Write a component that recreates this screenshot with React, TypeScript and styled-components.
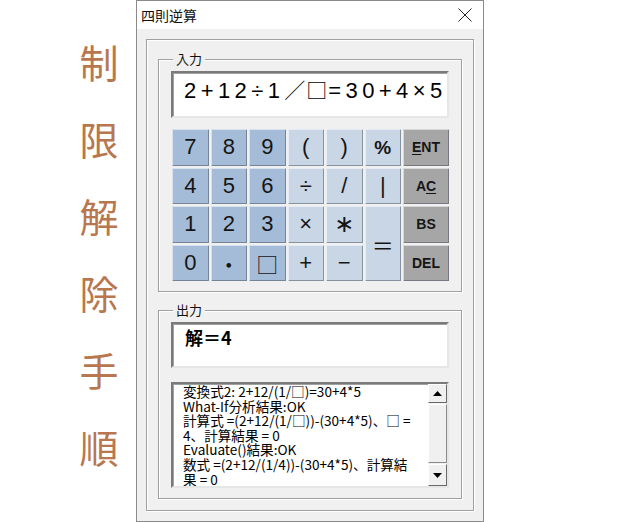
import React from 'react';
import styled, { createGlobalStyle, css } from 'styled-components';

const GlobalStyle = createGlobalStyle`
  html, body {
    margin: 0;
    padding: 0;
    background: #ffffff;
  }
  body {
    font-family: "Noto Sans CJK JP", "Noto Sans", sans-serif;
  }
`;

type KeyTone = 'digit' | 'op' | 'cmd';

interface KeyDef {
  label: React.ReactNode;
  tone: KeyTone;
  tall?: boolean;
  glyph?: 'cjk' | 'math';
  bold?: boolean;
}

const keys: KeyDef[] = [
  { label: '7', tone: 'digit' },
  { label: '8', tone: 'digit' },
  { label: '9', tone: 'digit' },
  { label: '(', tone: 'op' },
  { label: ')', tone: 'op' },
  { label: '%', tone: 'op', bold: true },
  { label: <><u>E</u>NT</>, tone: 'cmd' },
  { label: '4', tone: 'digit' },
  { label: '5', tone: 'digit' },
  { label: '6', tone: 'digit' },
  { label: '÷', tone: 'op' },
  { label: '/', tone: 'op' },
  { label: '|', tone: 'op' },
  { label: <>A<u>C</u></>, tone: 'cmd' },
  { label: '1', tone: 'digit' },
  { label: '2', tone: 'digit' },
  { label: '3', tone: 'digit' },
  { label: '×', tone: 'op' },
  { label: '∗', tone: 'op', glyph: 'math' },
  { label: '＝', tone: 'op', tall: true, glyph: 'cjk' },
  { label: 'BS', tone: 'cmd' },
  { label: '0', tone: 'digit' },
  { label: '・', tone: 'digit', glyph: 'cjk' },
  { label: '□', tone: 'digit', glyph: 'cjk' },
  { label: '+', tone: 'op' },
  { label: '−', tone: 'op' },
  { label: 'DEL', tone: 'cmd' }
];

// 出力ログ（折り返し位置は元画面どおり）
const logLines = [
  '変換式2: 2+12/(1/□)=30+4*5',
  'What-If分析結果:OK',
  '計算式 =(2+12/(1/□))-(30+4*5)、□ =',
  '4、計算結果 = 0',
  'Evaluate()結果:OK',
  '数式 =(2+12/(1/4))-(30+4*5)、計算結',
  '果 = 0'
];

const sideChars = ['制', '限', '解', '除', '手', '順'];

const App = () => {
  return (
    <Page>
      <GlobalStyle />
      <Side>
        {sideChars.map((c) => (
          <SideChar key={c}>{c}</SideChar>
        ))}
      </Side>

      <Window>
        <TitleBar>
          <Title>四則逆算</Title>
          <CloseIcon width="16" height="16" viewBox="0 0 16 16">
            <line x1="1.5" y1="1.5" x2="14.5" y2="14.5" stroke="#222" strokeWidth="1" />
            <line x1="14.5" y1="1.5" x2="1.5" y2="14.5" stroke="#222" strokeWidth="1" />
          </CloseIcon>
        </TitleBar>

        <Body>
          <OuterFrame>
            <Group>
              <GroupLabel>入力</GroupLabel>
              <InputBox>
                2+12÷1<Wide>／</Wide><Wide>□</Wide>=30+4×5
              </InputBox>
              <Keypad>
                {keys.map((k, i) => (
                  <Key key={i} $tone={k.tone} $tall={k.tall} $glyph={k.glyph} $bold={k.bold}>
                    {k.label}
                  </Key>
                ))}
              </Keypad>
            </Group>

            <Group $gapTop>
              <GroupLabel>出力</GroupLabel>
              <ResultBox>解＝4</ResultBox>
              <LogBox>
                <LogText>
                  {logLines.map((line) => (
                    <LogLine key={line}>{line}</LogLine>
                  ))}
                </LogText>
                <ScrollBar>
                  <ScrollBtn>
                    <svg width="9" height="5" viewBox="0 0 9 5">
                      <polygon points="4.5,0 9,5 0,5" fill="#000" />
                    </svg>
                  </ScrollBtn>
                  <ScrollThumb />
                  <ScrollBtn $down>
                    <svg width="9" height="5" viewBox="0 0 9 5">
                      <polygon points="0,0 9,0 4.5,5" fill="#000" />
                    </svg>
                  </ScrollBtn>
                </ScrollBar>
              </LogBox>
            </Group>
          </OuterFrame>
        </Body>
      </Window>
    </Page>
  );
};

const etched = css`
  border: 1px solid #a0a0a0;
  box-shadow:
    inset 1px 1px 0 #ffffff,
    1px 1px 0 #ffffff;
`;

const sunken = css`
  border-style: solid;
  border-width: 2px;
  border-color: #7a7a7a #e6e6e6 #e6e6e6 #7a7a7a;
  box-shadow: inset 1px 1px 0 #a0a0a0;
  background: #ffffff;
  box-sizing: border-box;
`;

const Page = styled.div`
  display: flex;
  width: 620px;
  height: 522px;
  background: #ffffff;
`;

const Side = styled.div`
  width: 136px;
  box-sizing: border-box;
  padding: 23px 0 0 62px;
  display: flex;
  flex-direction: column;
  align-items: center;
`;

const SideChar = styled.div`
  font-family: "Noto Sans CJK JP", sans-serif;
  font-size: 39px;
  line-height: 77px;
  color: #b8774f;
`;

const Window = styled.div`
  width: 348px;
  height: 522px;
  box-sizing: border-box;
  border: 1px solid #8a8a8a;
  background: #f0f0f0;
  display: flex;
  flex-direction: column;
`;

const TitleBar = styled.div`
  height: 29px;
  background: #ffffff;
  display: flex;
  align-items: center;
  justify-content: space-between;
  padding: 0 10px 0 4px;
`;

const Title = styled.span`
  font-family: "Noto Sans CJK JP", sans-serif;
  font-size: 14px;
  color: #111;
`;

const CloseIcon = styled.svg`
  display: block;
`;

const Body = styled.div`
  flex: 1;
  padding: 10px 9px;
  display: flex;
  flex-direction: column;
`;

const OuterFrame = styled.div`
  ${etched};
  flex: 1;
  padding: 19px 11px 11px 11px;
  display: flex;
  flex-direction: column;
`;

const Group = styled.div<{ $gapTop?: boolean }>`
  ${etched};
  position: relative;
  padding: 11px 12px 10px 12px;
  margin-top: ${(p) => (p.$gapTop ? '18px' : '0')};
  display: flex;
  flex-direction: column;
`;

const GroupLabel = styled.span`
  position: absolute;
  top: -10px;
  left: 14px;
  padding: 0 3px;
  background: #f0f0f0;
  font-family: "Noto Sans CJK JP", sans-serif;
  font-size: 13px;
  line-height: 18px;
  color: #111;
`;

const InputBox = styled.div`
  ${sunken};
  height: 47px;
  padding: 2px 0 0 11px;
  font-family: "Liberation Sans", "Noto Sans CJK JP", sans-serif;
  font-size: 22px;
  line-height: 28px;
  letter-spacing: 4.4px;
  color: #000;
  white-space: nowrap;
  overflow: hidden;
`;

const Wide = styled.span`
  font-family: "Noto Sans CJK JP", sans-serif;
  font-size: 21px;
  letter-spacing: 1px;
`;

const toneBg: Record<KeyTone, string> = {
  digit: '#a5bcd8',
  op: '#c9d6e6',
  cmd: '#a6a6a6'
};

const Keypad = styled.div`
  display: grid;
  grid-template-columns: repeat(6, 1fr) 46px;
  grid-template-rows: repeat(4, 1fr);
  gap: 2px;
  height: 152px;
  margin: 11px 0 0 1px;
`;

const Key = styled.div<{
  $tone: KeyTone;
  $tall?: boolean;
  $glyph?: 'cjk' | 'math';
  $bold?: boolean;
}>`
  display: flex;
  align-items: center;
  justify-content: center;
  grid-row: ${(p) => (p.$tall ? 'span 2' : 'auto')};
  background: ${(p) => toneBg[p.$tone]};
  box-shadow:
    inset 1px 1px 0 rgba(255, 255, 255, 0.55),
    inset -1px -1px 0 rgba(70, 78, 90, 0.5);
  color: #151515;
  font-family: ${(p) =>
    p.$glyph === 'cjk'
      ? '"Noto Sans CJK JP", sans-serif'
      : p.$glyph === 'math'
        ? '"DejaVu Sans", sans-serif'
        : '"Liberation Sans", Arial, sans-serif'};
  font-size: ${(p) =>
    p.$tone === 'cmd' ? '14px' : p.$glyph === 'math' ? '24px' : p.$bold ? '19px' : '22px'};
  font-weight: ${(p) => (p.$tone === 'cmd' || p.$bold ? 700 : 400)};
  line-height: 1;

  u {
    text-decoration-thickness: 1px;
    text-underline-offset: 2px;
  }
`;

const ResultBox = styled.div`
  ${sunken};
  height: 46px;
  padding: 1px 0 0 12px;
  font-family: "Noto Sans CJK JP", sans-serif;
  font-weight: 700;
  font-size: 18px;
  line-height: 24px;
  color: #000;
`;

const LogBox = styled.div`
  ${sunken};
  height: 106px;
  margin-top: 14px;
  display: flex;
  overflow: hidden;
`;

const LogText = styled.div`
  flex: 1;
  padding: 0 0 0 10px;
  overflow: hidden;
`;

const LogLine = styled.div`
  font-family: "Noto Sans CJK JP", sans-serif;
  font-size: 13.6px;
  line-height: 14.6px;
  color: #000;
  white-space: pre;
`;

const ScrollBar = styled.div`
  width: 19px;
  display: flex;
  flex-direction: column;
  background: #f0f0f0;
`;

const ScrollBtn = styled.div<{ $down?: boolean }>`
  height: ${(p) => (p.$down ? '22px' : '19px')};
  display: flex;
  align-items: center;
  justify-content: center;
  background: #f0f0f0;
  border-style: solid;
  border-width: 1px;
  border-color: #ffffff #696969 #696969 #ffffff;
  box-sizing: border-box;
`;

const ScrollThumb = styled.div`
  flex: 1;
  margin: 1px 0;
  background: #f0f0f0;
  border-style: solid;
  border-width: 1px;
  border-color: #ffffff #8a8a8a #8a8a8a #ffffff;
`;

export default App;
